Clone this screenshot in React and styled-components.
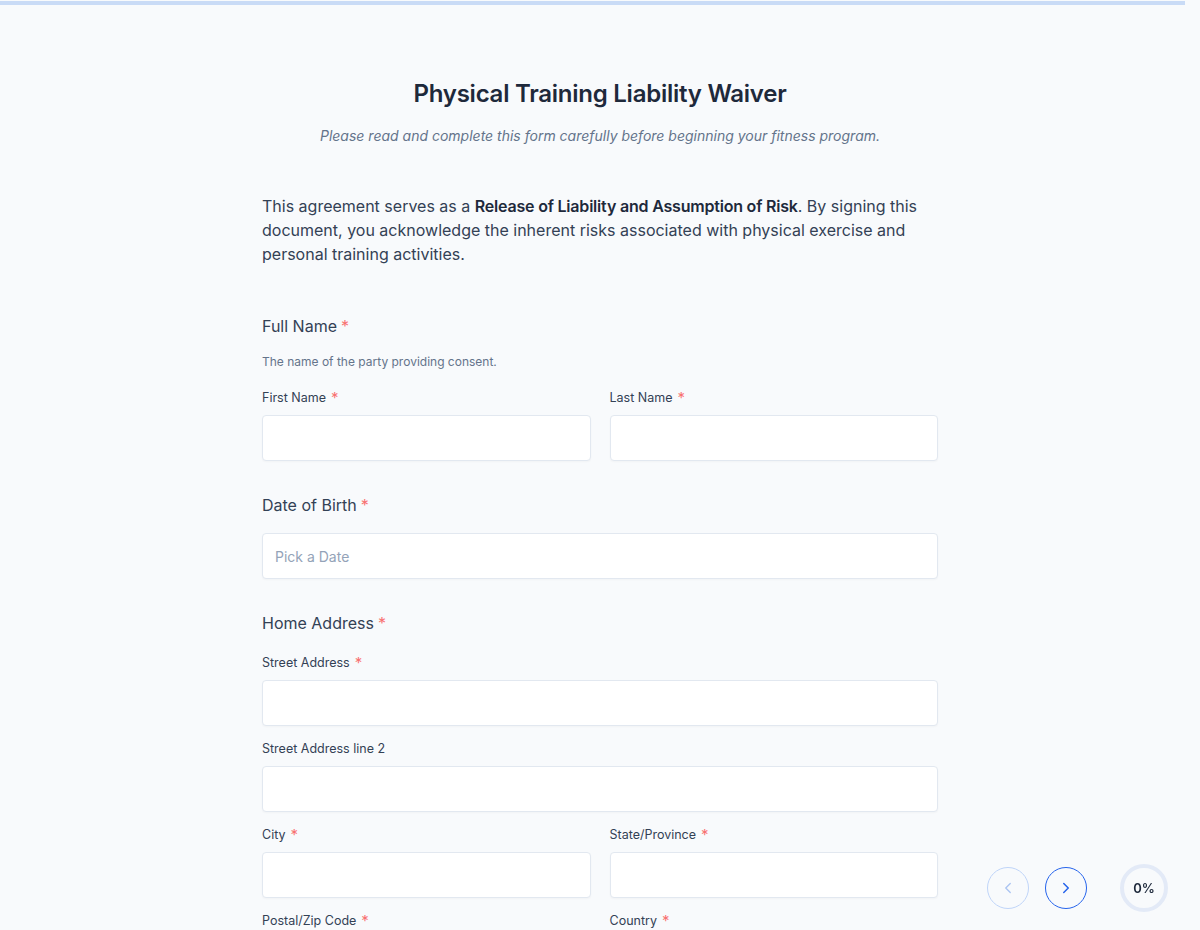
import React from 'react';
import styled, { createGlobalStyle } from 'styled-components';
import { ChevronLeft, ChevronRight } from 'lucide-react';

const GlobalStyle = createGlobalStyle`
  html, body {
    margin: 0;
    padding: 0;
    background: #f8fafc;
  }
  body {
    font-family: Inter, "Noto Sans", sans-serif;
    color: #334155;
  }
  * {
    box-sizing: border-box;
  }
`;

export default function App() {
  return (
    <>
      <GlobalStyle />
      <TopTrack />
      <Page>
        <Header>
          <Title>Physical Training Liability Waiver</Title>
          <Subtitle>
            Please read and complete this form carefully before beginning your fitness program.
          </Subtitle>
        </Header>

        <Intro>
          This agreement serves as a <strong>Release of Liability and Assumption of Risk</strong>. By
          signing this document, you acknowledge the inherent risks associated with physical exercise
          and personal training activities.
        </Intro>

        <Section>
          <SectionTitle>
            Full Name<Req>*</Req>
          </SectionTitle>
          <Hint>The name of the party providing consent.</Hint>
          <Grid>
            <Field label="First Name" required />
            <Field label="Last Name" required />
          </Grid>
        </Section>

        <Section>
          <SectionTitle>
            Date of Birth<Req>*</Req>
          </SectionTitle>
          <Input placeholder="Pick a Date" />
        </Section>

        <Section>
          <SectionTitle>
            Home Address<Req>*</Req>
          </SectionTitle>
          <Grid $top={20}>
            <Field label="Street Address" required wide />
            <Field label="Street Address line 2" wide />
            <Field label="City" required />
            <Field label="State/Province" required />
            <Field label="Postal/Zip Code" required />
            <Field label="Country" required />
          </Grid>
        </Section>
      </Page>

      <Dock>
        <NavButton disabled aria-label="Previous">
          <ChevronLeft size={18} strokeWidth={1.75} />
        </NavButton>
        <NavButton aria-label="Next">
          <ChevronRight size={18} strokeWidth={2} />
        </NavButton>
        <Progress>0%</Progress>
      </Dock>
    </>
  );
}

const Field = ({ label, required, wide }) => (
  <FieldBox $wide={wide}>
    <FieldLabel>
      {label}
      {required && <LabelReq>*</LabelReq>}
    </FieldLabel>
    <Input />
  </FieldBox>
);

const TopTrack = styled.div`
  position: fixed;
  top: 1px;
  left: 0;
  width: calc(100% - 15px);
  height: 4px;
  background: #c9dbf6;
  z-index: 5;
`;

const Page = styled.main`
  max-width: 676px;
  margin: 0 auto;
  padding: 78px 0 120px;
`;

const Header = styled.header`
  text-align: center;
`;

const Title = styled.h1`
  margin: 0;
  font-size: 24px;
  line-height: 32px;
  font-weight: 600;
  color: #1e293b;
  letter-spacing: -0.25px;
`;

const Subtitle = styled.p`
  margin: 16px 0 0;
  font-size: 14px;
  line-height: 20px;
  font-style: italic;
  color: #64748b;
`;

const Intro = styled.p`
  margin: 48px 0 0;
  font-size: 16px;
  line-height: 24px;
  color: #334155;

  strong {
    font-weight: 600;
    color: #1e293b;
    letter-spacing: -0.2px;
  }
`;

const Section = styled.section`
  margin-top: 48px;

  & + & {
    margin-top: 32px;
  }

  > input {
    margin-top: 16px;
  }
`;

const SectionTitle = styled.h2`
  margin: 0;
  font-size: 16px;
  line-height: 24px;
  font-weight: 400;
  color: #334155;
`;

const Req = styled.span`
  color: #f87171;
  margin-left: 4px;
`;

const LabelReq = styled.span`
  color: #f87171;
  margin-left: 5px;
  font-size: 15px;
  line-height: 15px;
  vertical-align: top;
`;

const Hint = styled.p`
  margin: 16px 0 0;
  font-size: 12px;
  line-height: 16px;
  color: #64748b;
`;

const Grid = styled.div`
  display: grid;
  grid-template-columns: 1fr 1fr;
  column-gap: 19px;
  row-gap: 15px;
  margin-top: ${(p) => p.$top ?? 20}px;
`;

const FieldBox = styled.div`
  display: flex;
  flex-direction: column;
  gap: 9px;
  grid-column: ${(p) => (p.$wide ? '1 / -1' : 'auto')};
`;

const FieldLabel = styled.label`
  display: block;
  height: 16px;
  font-size: 12.5px;
  line-height: 16px;
  color: #334155;
`;

const Input = styled.input`
  display: block;
  width: 100%;
  height: 46px;
  padding: 0 12px;
  border: 1px solid #e2e8f0;
  border-radius: 4px;
  background: #fff;
  font-family: inherit;
  font-size: 14px;
  color: #334155;
  box-shadow: 0 1px 2px rgba(15, 23, 42, 0.03);

  &::placeholder {
    color: #94a3b8;
  }
`;

const Dock = styled.div`
  position: fixed;
  right: 32px;
  bottom: 18px;
  display: flex;
  align-items: center;
`;

const NavButton = styled.button`
  width: 42px;
  height: 42px;
  margin-right: 16px;
  border-radius: 50%;
  border: 1px solid ${(p) => (p.disabled ? '#bfd4f8' : '#2563eb')};
  background: transparent;
  color: ${(p) => (p.disabled ? '#a9c3f2' : '#2563eb')};
  display: flex;
  align-items: center;
  justify-content: center;
  padding: 0;
  cursor: ${(p) => (p.disabled ? 'default' : 'pointer')};

  & + & {
    margin-right: 33px;
  }
`;

const Progress = styled.div`
  width: 48px;
  height: 48px;
  border-radius: 50%;
  border: 4px solid #e3eaf7;
  display: flex;
  align-items: center;
  justify-content: center;
  font-size: 13px;
  font-weight: 600;
  color: #1e293b;
`;
